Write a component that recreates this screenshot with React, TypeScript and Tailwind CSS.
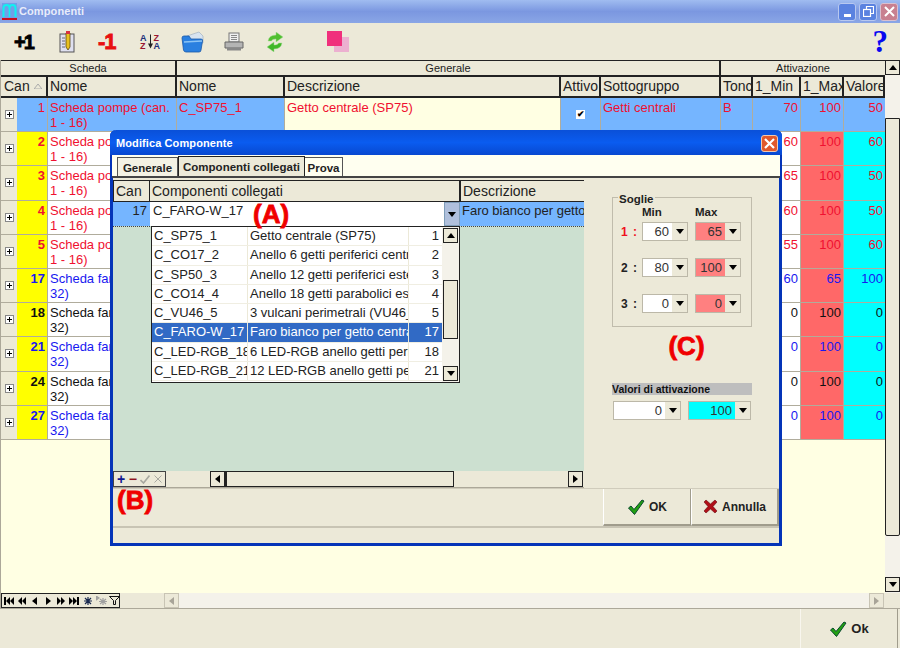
import React from 'react';

const sans = 'font-["Liberation_Sans",Arial,sans-serif]';

const Tri = ({ dir = 'down', className = 'fill-black' }: { dir?: 'up' | 'down' | 'left' | 'right'; className?: string }) => {
  const pts = { up: '4,0 8,5 0,5', down: '0,0 8,0 4,5', left: '5,0 5,8 0,4', right: '0,0 0,8 5,4' }[dir];
  const vertical = dir === 'up' || dir === 'down';
  return (
    <svg width={vertical ? 8 : 5} height={vertical ? 5 : 8} className={className}>
      <polygon points={pts} />
    </svg>
  );
};

const ScrollBtn = ({ dir, className = '' }: { dir: 'up' | 'down' | 'left' | 'right'; className?: string }) => (
  <div className={`flex items-center justify-center border border-[#222] bg-[#ece9d8] shrink-0 ${className}`}>
    <Tri dir={dir} />
  </div>
);

const Check = ({ size = 18 }: { size?: number }) => (
  <svg width={size} height={size} viewBox="0 0 18 18">
    <path d="M1.5 10 L4 8 L7 11.5 L15 2 L17 3 L7.5 16.5 Z" fill="#22a012" stroke="#0a4a30" strokeWidth="1" />
  </svg>
);

const Cross = () => (
  <svg width="15" height="15" viewBox="0 0 15 15">
    <path d="M1 3 L3 1 L7.5 5 L12 1 L14 3 L10 7.5 L14 12 L12 14 L7.5 10 L3 14 L1 12 L5 7.5 Z" fill="#b01018" stroke="#6a0a10" strokeWidth="0.6" />
  </svg>
);

const TitleIcon = () => (
  <svg width="15" height="17" viewBox="0 0 15 17">
    <rect width="15" height="15" fill="#6fa0e8" />
    <path d="M1.5 14 V5 Q1.5 2 4.5 2 Q7.5 2 7.5 5 Q7.5 2 10.5 2 Q13.5 2 13.5 5 V14" fill="none" stroke="#10f0f0" strokeWidth="2" />
    <path d="M7.5 5 V14" stroke="#10f0f0" strokeWidth="1.6" />
    <rect y="15" width="15" height="2" fill="#c81020" />
  </svg>
);

const Toolbar = () => (
  <div className="h-[37px] bg-[#ece9d8] flex items-center relative shrink-0">
    <div className="w-[46px] pl-[14px] text-[20px] leading-none font-black tracking-[-2px] text-black font-['Liberation_Sans',sans-serif] [-webkit-text-stroke:0.8px_black]">+1</div>
    <div className="w-[50px] pl-[13px] flex">
      <svg width="16" height="23" viewBox="0 0 16 23">
        <rect x="1" y="4" width="14" height="18" fill="#dfe0f0" stroke="#555" />
        <path d="M3 8h3M3 11h3M3 14h3M3 17h3" stroke="#667" />
        <path d="M7 3 L11 3 L11 17 L9 20 L7 17 Z" fill="#e8c020" stroke="#5a4a10" strokeWidth="0.8" />
        <rect x="7" y="1" width="4" height="3" fill="#d83040" />
      </svg>
    </div>
    <div className="w-[44px] pl-[2px] text-[22px] leading-none font-black tracking-[-1px] text-[#e81010] font-['Liberation_Sans',sans-serif] [-webkit-text-stroke:0.8px_#e81010]">-1</div>
    <div className="w-[41px] flex items-center gap-[1px] text-[9px] leading-[8px] font-bold font-['Liberation_Sans',sans-serif]">
      <div className="flex flex-col"><span className="text-[#20307a]">A</span><span className="text-[#9a1530]">Z</span></div>
      <svg width="5" height="15" viewBox="0 0 5 14"><path d="M2.5 0 V10" stroke="#222" /><polygon points="0,9 5,9 2.5,14" fill="#222" /></svg>
      <div className="flex flex-col"><span className="text-[#9a1530]">Z</span><span className="text-[#20307a]">A</span></div>
    </div>
    <div className="w-[43px] flex">
      <svg width="24" height="22" viewBox="0 0 24 22">
        <path d="M6 5 L18 1 L22 5 L22 12 L6 12 Z" fill="#d8e4f0" stroke="#9ab" strokeWidth="0.6" />
        <path d="M1 7 Q1 5 3 5 L8 5 L10 8 L20 8 Q22 8 21.5 10 L20 19 Q20 21 18 21 L5 21 Q3 21 2.5 19 Z" fill="#2a80e0" stroke="#1a58a8" strokeWidth="0.8" />
        <path d="M3 11 L21 10" stroke="#8cc4f4" strokeWidth="1.5" />
      </svg>
    </div>
    <div className="w-[42px] flex">
      <svg width="20" height="19" viewBox="0 0 20 19">
        <rect x="5" y="1" width="10" height="9" fill="#f0f0f0" stroke="#777" />
        <path d="M7 3.5h6M7 5.5h6M7 7.5h6" stroke="#888" />
        <path d="M1 10 H19 V16 H1 Z" fill="#b4b4b4" stroke="#666" />
        <rect x="3" y="16" width="14" height="2.5" fill="#888" />
      </svg>
    </div>
    <div className="w-[61px] flex">
      <svg width="18" height="20" viewBox="0 0 18 20">
        <path d="M2 9 Q3 3 10 3 L10 0 L17 5 L10 10 L10 7 Q6 7 5.5 9 Z" fill="#50c030" stroke="#a8d898" strokeWidth="0.5" />
        <path d="M16 11 Q15 17 8 17 L8 20 L1 15 L8 10 L8 13 Q12 13 12.5 11 Z" fill="#40b828" stroke="#a8d898" strokeWidth="0.5" />
      </svg>
    </div>
    <div className="flex">
      <svg width="22" height="21" viewBox="0 0 22 21">
        <rect x="7" y="6" width="15" height="15" fill="#ecb0d0" />
        <rect x="0" y="0" width="15" height="15" fill="#f0307c" />
      </svg>
    </div>
    <div className="absolute right-[12px] top-[3px] text-[31px] leading-[31px] font-bold text-[#0808f0] font-['Liberation_Serif',serif]">?</div>
  </div>
);

const cols = 'grid-cols-[16px_31px_129px_108px_276px_40px_120px_32px_48px_43px_41px]';

type Row = { can: number; text: string; min: number; max: number; val: number; tone: 'red' | 'blue' | 'black'; nome: string; desc: string; sotto: string };

const pompe = 'Scheda pompe (can. 1 - 16)';
const faro = 'Scheda fari (can 17 - 32)';
const rows: Row[] = [
  { can: 2, text: pompe, min: 60, max: 100, val: 60, tone: 'red', nome: 'C_CO17_2', desc: 'Anello 6 getti', sotto: 'Getti' },
  { can: 3, text: pompe, min: 65, max: 100, val: 50, tone: 'red', nome: 'C_SP50_3', desc: 'Anello 12 getti', sotto: 'Getti' },
  { can: 4, text: pompe, min: 60, max: 100, val: 50, tone: 'red', nome: 'C_CO14_4', desc: 'Anello 18 getti', sotto: 'Getti' },
  { can: 5, text: pompe, min: 55, max: 100, val: 60, tone: 'red', nome: 'C_VU46_5', desc: '3 vulcani', sotto: 'Vulcani' },
  { can: 17, text: faro, min: 60, max: 65, val: 100, tone: 'blue', nome: 'C_FARO-W_17', desc: 'Faro bianco', sotto: 'Fari' },
  { can: 18, text: faro, min: 0, max: 100, val: 0, tone: 'black', nome: 'C_LED-RGB_18', desc: '6 LED-RGB', sotto: 'Fari' },
  { can: 21, text: faro, min: 0, max: 100, val: 0, tone: 'blue', nome: 'C_LED-RGB_21', desc: '12 LED-RGB', sotto: 'Fari' },
  { can: 24, text: faro, min: 0, max: 100, val: 0, tone: 'black', nome: 'C_LED-RGB_24', desc: '18 LED-RGB', sotto: 'Fari' },
  { can: 27, text: faro, min: 0, max: 100, val: 0, tone: 'blue', nome: 'C_LED-RGB_27', desc: '24 LED-RGB', sotto: 'Fari' },
];

const toneClass = { red: 'text-[#f01030]', blue: 'text-[#1818f0]', black: 'text-[#111]' };

const Plus = () => (
  <div className="w-[9px] h-[9px] mt-[12px] ml-[4px] border border-[#888] bg-white flex items-center justify-center relative">
    <div className="w-[5px] h-px bg-black" />
    <div className="absolute w-px h-[5px] bg-black" />
  </div>
);

const Head = ({ children, className = '' }: { children: React.ReactNode; className?: string }) => (
  <div className={`h-[19px] border-r-2 border-[#222] pl-[2px] text-[14px] leading-[19px] text-[#222] whitespace-nowrap overflow-hidden ${className}`}>{children}</div>
);

const Cell = ({ children, className = '' }: { children?: React.ReactNode; className?: string }) => (
  <div className={`border-r border-b border-[#b0ac9c] px-[2px] text-[13px] leading-[15px] pt-[2px] overflow-hidden ${className}`}>{children}</div>
);

const MainGrid = () => (
  <div className="flex-1 flex min-h-0">
    <div className="w-[884px] flex flex-col bg-[#ffffe3]">
      <div className={`grid ${cols} h-[17px] bg-[#ece9d8] border-y border-[#222] border-b-2 text-[11px] leading-[14px] text-[#222] text-center shrink-0`}>
        <div className="col-span-3 border-r-2 border-[#222]">Scheda</div>
        <div className="col-span-4 border-r-2 border-[#222]">Generale</div>
        <div className="col-span-4">Attivazione</div>
      </div>
      <div className={`grid ${cols} bg-[#ece9d8] border-b-2 border-[#222] shrink-0`}>
        <Head className="col-span-2 flex items-center gap-[4px]">
          <span className="pl-[1px]">Can</span>
          <Tri dir="up" className="fill-none stroke-[#aaa]" />
        </Head>
        <Head>Nome</Head>
        <Head>Nome</Head>
        <Head>Descrizione</Head>
        <Head className="border-r">Attivo</Head>
        <Head>Sottogruppo</Head>
        <Head className="border-r">Tonc</Head>
        <Head>1_Min</Head>
        <Head className="border-r">1_Max</Head>
        <Head className="border-r-0">Valore</Head>
      </div>
      <div className={`grid ${cols} auto-rows-[34.2px] ${sans}`}>
        <div className="bg-[#ece9d8] border-b border-[#b0ac9c]"><Plus /></div>
        <Cell className="bg-[#75b5ff] text-[#f01030] text-right">1</Cell>
        <Cell className="bg-[#75b5ff] text-[#f01030]">Scheda pompe (can. 1 - 16)</Cell>
        <Cell className="bg-[#75b5ff] text-[#f01030]">C_SP75_1</Cell>
        <Cell className="text-[#f01030]">Getto centrale (SP75)</Cell>
        <Cell className="bg-[#75b5ff] flex justify-center">
          <div className="w-[9px] h-[9px] mt-[10px] bg-white text-black text-[9px] leading-[9px] font-bold text-center">✔</div>
        </Cell>
        <Cell className="bg-[#75b5ff] text-[#f01030]">Getti centrali</Cell>
        <Cell className="bg-[#75b5ff] text-[#f01030]">B</Cell>
        <Cell className="bg-[#75b5ff] text-[#f01030] text-right">70</Cell>
        <Cell className="bg-[#75b5ff] text-[#f01030] text-right">100</Cell>
        <Cell className="bg-[#75b5ff] text-[#f01030] text-right border-r-0">50</Cell>
        {rows.map(r => (
          <React.Fragment key={r.can}>
            <div className="bg-[#ece9d8] border-b border-[#b0ac9c]"><Plus /></div>
            <Cell className={`bg-[#ffff00] text-right font-bold ${toneClass[r.tone]}`}>{r.can}</Cell>
            <Cell className={`bg-white ${toneClass[r.tone]}`}>{r.text}</Cell>
            <Cell className={`bg-white ${toneClass[r.tone]}`}>{r.nome}</Cell>
            <Cell className={`bg-white ${toneClass[r.tone]}`}>{r.desc}</Cell>
            <Cell className="bg-white" />
            <Cell className={`bg-white ${toneClass[r.tone]}`}>{r.sotto}</Cell>
            <Cell className="bg-white" />
            <Cell className={`bg-white text-right ${toneClass[r.tone]}`}>{r.min}</Cell>
            <Cell className={`bg-[#ff6868] text-right ${toneClass[r.tone]}`}>{r.max}</Cell>
            <Cell className={`bg-[#00ffff] text-right border-r-0 ${toneClass[r.tone]}`}>{r.val}</Cell>
          </React.Fragment>
        ))}
      </div>
    </div>
    <div className="w-[16px] bg-[#f4f2ea] flex flex-col">
      <ScrollBtn dir="up" className="h-[15px]" />
      <div className="h-[43px]" />
      <div className="h-[418px] border border-[#222] bg-[#ece9d8] rounded-b-[2px]" />
      <div className="flex-1" />
      <ScrollBtn dir="down" className="h-[15px] mb-px" />
    </div>
  </div>
);

const NavIcons = () => (
  <div className="w-[119px] h-[15px] border border-[#222] flex items-center px-[2px] bg-[#ece9d8]">
    <svg width="10" height="8" className="fill-black shrink-0"><rect width="2" height="8" /><polygon points="6,0 6,8 2,4" /><polygon points="10,0 10,8 6,4" /></svg>
    <svg width="9" height="8" className="fill-black shrink-0 ml-[4px]"><polygon points="4,0 4,8 0,4" /><polygon points="8,0 8,8 4,4" /></svg>
    <svg width="5" height="8" className="fill-black shrink-0 ml-[5px]"><polygon points="5,0 5,8 0,4" /></svg>
    <svg width="5" height="8" className="fill-black shrink-0 ml-[9px]"><polygon points="0,0 0,8 5,4" /></svg>
    <svg width="9" height="8" className="fill-black shrink-0 ml-[6px]"><polygon points="0,0 0,8 4,4" /><polygon points="4,0 4,8 8,4" /></svg>
    <svg width="10" height="8" className="fill-black shrink-0 ml-[3px]"><polygon points="0,0 0,8 4,4" /><polygon points="4,0 4,8 8,4" /><rect x="8" width="2" height="8" /></svg>
    <svg width="8" height="8" stroke="#1a2a50" strokeWidth="1.2" className="shrink-0 ml-[5px]"><path d="M4 0V8M0 4H8M1 1L7 7M7 1L1 7" /></svg>
    <svg width="11" height="9" stroke="#a0a0a0" strokeWidth="1.2" fill="#a0a0a0" className="shrink-0 ml-[4px]"><path d="M7 2V9M3 5.5H11M4 3L10 8M10 3L4 8" /><polygon points="0,0 0,4 3,2" /></svg>
    <svg width="11" height="9" viewBox="0 0 11 9" fill="none" stroke="#111" strokeWidth="1" className="shrink-0 ml-[2px]"><path d="M0.5 0.5H10.5L6.5 4.5V8.5H4.5V4.5Z" /></svg>
  </div>
);

const Combo = ({ value, bg = 'bg-white', w, btn = 'bg-[#ece9d8]' }: { value: number; bg?: string; w: string; btn?: string }) => (
  <div className={`h-[19px] flex border border-[#bcb8a8] ${w} ${bg}`}>
    <div className="flex-1 text-right pr-[3px] text-[13px] leading-[17px] text-[#333]">{value}</div>
    <div className={`w-[15px] flex items-center justify-center ${btn}`}><Tri /></div>
  </div>
);

const Threshold = ({ n, min, max, red }: { n: number; min: number; max: number; red?: boolean }) => (
  <div className="flex items-center">
    <div className={`w-[29px] text-right pr-[4px] text-[12px] font-bold tracking-[1px] ${red ? 'text-[#f01020]' : 'text-[#222]'}`}>{n} :</div>
    <Combo value={min} w="w-[46px]" />
    <Combo value={max} w="w-[46px] ml-[7px]" bg="bg-[#ff8080]" />
  </div>
);

const listItems = [
  ['C_SP75_1', 'Getto centrale (SP75)', 1],
  ['C_CO17_2', 'Anello 6 getti periferici centrali', 2],
  ['C_SP50_3', 'Anello 12 getti periferici esterni', 3],
  ['C_CO14_4', 'Anello 18 getti parabolici esterni', 4],
  ['C_VU46_5', '3 vulcani perimetrali (VU46_5)', 5],
  ['C_FARO-W_17', 'Faro bianco per getto centrale', 17],
  ['C_LED-RGB_18', '6 LED-RGB anello getti periferici', 18],
  ['C_LED-RGB_21', '12 LED-RGB anello getti periferici', 21],
] as const;

const Dropdown = () => (
  <div className="absolute left-[38px] top-[46px] w-[309px] h-[157px] bg-white border border-[#222] flex z-10">
    <div className="flex-1 flex flex-col">
      {listItems.map(([name, desc, n]) => {
        const sel = n === 17;
        return (
          <div key={n} className={`h-[19.3px] flex text-[13px] leading-[18px] border-b border-[#f0eee2] ${sel ? 'bg-[#316ac5] text-white' : 'text-[#222]'}`}>
            <div className="w-[96px] pl-[2px] border-r border-[#ece9d8] whitespace-nowrap overflow-hidden">{name}</div>
            <div className="w-[161px] pl-[2px] border-r border-[#ece9d8] whitespace-nowrap overflow-hidden">{desc}</div>
            <div className="w-[32px] pr-[2px] text-right">{n}</div>
          </div>
        );
      })}
    </div>
    <div className="w-[17px] bg-[#f4f2ea] flex flex-col py-px">
      <ScrollBtn dir="up" className="h-[15px] w-[15px] ml-[1px]" />
      <div className="h-[37px]" />
      <div className="h-[59px] border border-[#222] bg-[#ece9d8] ml-[1px] w-[15px]" />
      <div className="flex-1" />
      <ScrollBtn dir="down" className="h-[15px] w-[15px] ml-[1px]" />
    </div>
  </div>
);

const ModalGrid = () => (
  <div className="w-[471px] flex flex-col relative">
    <div className="h-[22px] flex bg-[#ece9d8] border-y border-[#222] text-[14px] leading-[20px] text-[#222] shrink-0">
      <div className="w-[37px] pl-[2px] border-x border-[#222]">Can</div>
      <div className="w-[310px] pl-[2px] border-r border-[#222]">Componenti collegati</div>
      <div className="flex-1 pl-[2px] border-l border-[#222]">Descrizione</div>
    </div>
    <div className="flex-1 bg-[#cce0d0] flex flex-col">
      <div className="h-[25px] flex border-b border-dotted border-[#444] text-[13px] leading-[17px] text-[#222]">
        <div className="w-[37px] bg-[#75b5ff] text-right pr-[3px]">17</div>
        <div className="w-[310px] bg-white flex justify-between pl-[3px]">
          <span>C_FARO-W_17</span>
          <div className="w-[16px] bg-[#b0c0dc] border border-[#7f9db9] flex items-center justify-center"><Tri /></div>
        </div>
        <div className="flex-1 bg-[#75b5ff] pl-[2px] whitespace-nowrap overflow-hidden">Faro bianco per getto centrale</div>
      </div>
    </div>
    <div className="h-[17px] flex items-center bg-[#ece9d8] border-b border-[#aca899] shrink-0">
      <div className="w-[53px] h-[16px] border border-[#444] flex items-center justify-between px-[3px] text-[14px] font-bold leading-none">
        <span className="text-[#101890]">+</span>
        <span className="text-[#901020]">−</span>
        <svg width="10" height="9" fill="none" stroke="#a8a8a0" strokeWidth="1.6"><path d="M0.5 5L3.5 8L9.5 0.5" /></svg>
        <svg width="8" height="8" stroke="#a8a8a0" strokeWidth="1"><path d="M0.5 0.5L7.5 7.5M7.5 0.5L0.5 7.5" /></svg>
      </div>
      <div className="w-[44px]" />
      <ScrollBtn dir="left" className="h-[16px] w-[15px]" />
      <div className="w-[229px] h-[16px] border border-[#222] border-l-2" />
      <div className="flex-1" />
      <ScrollBtn dir="right" className="h-[16px] w-[15px] mr-px" />
    </div>
    <Dropdown />
  </div>
);

const Modal = () => (
  <div className={`absolute left-[110px] top-[130px] w-[672px] h-[416px] border-[3px] border-t-0 border-[#0434b8] rounded-t-[6px] bg-[#ece9d8] flex flex-col ${sans}`}>
    <div className="h-[25px] -mx-[3px] rounded-t-[6px] bg-gradient-to-b from-[#0a50d8] via-[#0a5cf0] to-[#0848d0] flex items-center justify-between pl-[6px] pr-[4px] pt-[2px] shrink-0">
      <span className="text-white text-[11px] font-bold tracking-[0.1px]">Modifica Componente</span>
      <div className="w-[17px] h-[17px] rounded-[3px] bg-[#e0582c] border border-[#f0c8b0] flex items-center justify-center">
        <svg width="11" height="11" stroke="white" strokeWidth="2.2"><path d="M1 1L10 10M10 1L1 10" /></svg>
      </div>
    </div>
    <div className="h-[23px] bg-[#fffff0] border-b-2 border-[#444] flex items-end pl-[5px] text-[11.5px] font-bold text-[#222] shrink-0 -mx-[1px]">
      <div className="w-[61px] h-[19px] leading-[20px] text-center border border-b-0 border-[#555] bg-[#f4f2e4]">Generale</div>
      <div className="w-[127px] h-[20px] leading-[21px] text-center border border-b-0 border-[#222] bg-[#ece9d8]">Componenti collegati</div>
      <div className="w-[38px] h-[19px] leading-[20px] text-center border-r border-t border-[#555]">Prova</div>
    </div>
    <div className="h-[310px] flex pt-[2px] shrink-0">
      <ModalGrid />
      <div className="flex-1 flex flex-col pl-[28px] pt-[17px]">
        <div className="w-[140px] h-[130px] border border-[#c0bcac] relative pt-[8px]">
          <span className="absolute -top-[6px] left-[5px] bg-[#ece9d8] px-[1px] text-[11.5px] font-bold text-[#222] leading-[14px]">Soglie</span>
          <div className="flex text-[11.5px] font-bold text-[#222] leading-[13px] pl-[29px] mb-[3px]">
            <span className="w-[53px]">Min</span>
            <span>Max</span>
          </div>
          <div className="flex flex-col gap-[17px]">
            <Threshold n={1} min={60} max={65} red />
            <Threshold n={2} min={80} max={100} />
            <Threshold n={3} min={0} max={0} />
          </div>
        </div>
        <div className="w-[140px] pl-[9px] text-center text-[26px] font-black leading-[28px] mt-[5px] text-[#f00000] [-webkit-text-stroke:0.8px_#f00000]">(C)</div>
        <div className="w-[140px] h-[12px] mt-[23px] bg-[#bebebe] text-[10.5px] font-bold leading-[12px] text-[#111]">Valori di attivazione</div>
        <div className="flex gap-[7px] mt-[6px] pl-[1px]">
          <Combo value={0} w="w-[68px]" />
          <Combo value={100} w="w-[63px]" bg="bg-[#00ffff]" />
        </div>
      </div>
    </div>
    <div className="h-[38px] flex justify-between shrink-0 border-t border-[#d0ccbc]">
      <div className="pl-[4px] text-[26px] font-black leading-[22px] text-[#f00000] [-webkit-text-stroke:0.8px_#f00000]">(B)</div>
      <div className="flex">
        <div className="w-[88px] h-[37px] flex items-center justify-center gap-[4px] text-[12px] font-bold text-[#222] border-r border-b-2 border-[#a09c8c] border-l border-l-white">
          <Check />OK
        </div>
        <div className="w-[88px] h-[37px] flex items-center justify-center gap-[4px] text-[12px] font-bold text-[#222] border-r-2 border-b-2 border-[#a09c8c] border-l border-l-white">
          <Cross />Annulla
        </div>
      </div>
    </div>
    <div className="flex-1 border-t-2 border-[#c8c4b4]" />
    <div className="absolute left-[140px] top-[71px] z-20 text-[26px] font-black leading-[26px] text-[#f00000] [-webkit-text-stroke:0.8px_#f00000]">(A)</div>
  </div>
);

export default function App() {
  return (
    <div className={`relative w-[900px] h-[648px] overflow-hidden flex flex-col bg-[#ece9d8] ${sans}`}>
      <div className="h-[23px] shrink-0 bg-gradient-to-b from-[#a0bcf0] via-[#7b97e0] to-[#8aa6e6] flex items-center justify-between pl-[2px] pr-[2px]">
        <div className="flex items-center gap-[2px]">
          <TitleIcon />
          <span className="text-[#e8ecfa] text-[11px] font-bold tracking-[0.1px]">Componenti</span>
        </div>
        <div className="flex gap-[3px]">
          <div className="w-[18px] h-[18px] rounded-[3px] bg-[#5a82e0] border border-[#b8c8f0] flex items-end justify-center pb-[3px]"><div className="w-[7px] h-[3px] bg-white" /></div>
          <div className="w-[18px] h-[18px] rounded-[3px] bg-[#5a82e0] border border-[#b8c8f0] flex items-center justify-center">
            <svg width="11" height="11" fill="none" stroke="white" strokeWidth="1.2"><rect x="0.5" y="3.5" width="7" height="7" /><path d="M3.5 3V0.5H10.5V7.5H8" /></svg>
          </div>
          <div className="w-[18px] h-[18px] rounded-[3px] bg-[#c88090] border border-[#d8c0d0] flex items-center justify-center">
            <svg width="11" height="11" stroke="white" strokeWidth="2"><path d="M1 1L10 10M10 1L1 10" /></svg>
          </div>
        </div>
      </div>
      <Toolbar />
      <div className="flex-1 flex flex-col min-h-0 border-l border-[#aca899]">
        <MainGrid />
        <div className="h-[15px] flex shrink-0 bg-[#ece9d8]">
          <NavIcons />
          <div className="w-[44px]" />
          <div className="w-[15px] border border-[#c8c4b4] flex items-center justify-center"><Tri dir="left" className="fill-[#a8a498]" /></div>
          <div className="w-[690px] bg-[#f4f2ea]" />
          <div className="w-[15px] border border-[#c8c4b4] flex items-center justify-center"><Tri dir="right" className="fill-[#a8a498]" /></div>
        </div>
      </div>
      <div className="h-[40px] shrink-0 border-t border-[#aca899] flex justify-end pr-[2px]">
        <div className="w-[98px] flex items-center justify-center gap-[4px] text-[13px] font-bold text-[#222] border-l border-[#f8f6ee] border-r border-r-[#a09c8c]">
          <Check />Ok
        </div>
      </div>
      <Modal />
    </div>
  );
}
